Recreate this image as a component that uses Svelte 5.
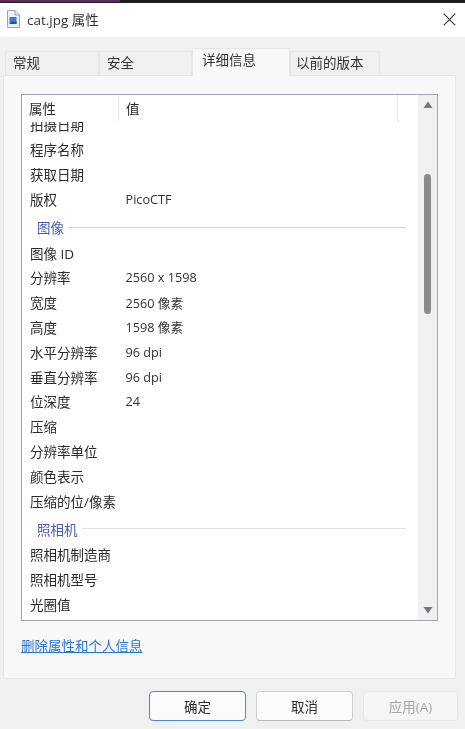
<script>
  const tabs = [
    { label: '常规', w: 94, pad: 7 },
    { label: '安全', w: 93, pad: 7 },
    { label: '详细信息', w: 98, pad: 9, active: true },
    { label: '以前的版本', w: 90, pad: 5 }
  ];
  const group1 = [
    ['程序名称', ''], ['获取日期', ''], ['版权', 'PicoCTF']
  ];
  const group2 = [
    ['图像 ID', ''], ['分辨率', '2560 x 1598'], ['宽度', '2560 像素'], ['高度', '1598 像素'],
    ['水平分辨率', '96 dpi'], ['垂直分辨率', '96 dpi'], ['位深度', '24'], ['压缩', ''],
    ['分辨率单位', ''], ['颜色表示', ''], ['压缩的位/像素', '']
  ];
  const group3 = [['照相机制造商', ''], ['照相机型号', ''], ['光圈值', '']];
</script>

<div class="screen">
  <div class="topstrip"><div class="purple"></div></div>
  <header class="titlebar">
    <svg class="fileicon" width="14" height="18" viewBox="0 0 14 18">
      <path d="M1.500 .5h7.500l4.500 4.500v12.500h-12z" fill="#eef0f5" stroke="#9aa3b2" />
      <path d="M9 .5v4.500h4.500" fill="#dfe4ec" stroke="#9aa3b2" />
      <rect x="3.500" y="7" width="7" height="7" fill="#2f7fd6" />
      <path d="M3.500 14l3-3 2 1.500 2-1.500v3z" fill="#1f4fa8" />
    </svg>
    <span class="title">cat.jpg 属性</span>
    <svg class="close" width="13" height="13" viewBox="0 0 13 13">
      <path d="M.7 .7l11.600 11.600M12.300 .7l-11.600 11.600" stroke="#333" stroke-width="1.100" fill="none" />
    </svg>
  </header>

  <main class="body">
    <nav class="tabs">
      {#each tabs as t}
        <div class="tab" class:active={t.active} style="width:{t.w}px;padding-left:{t.pad}px">{t.label}</div>
      {/each}
    </nav>

    <section class="panel">
      <div class="listbox">
        <div class="content">
          <div class="head">
            <div class="hcell first">属性</div>
            <div class="hcell second">值</div>
            <div class="hcell third"></div>
          </div>
          <div class="rows">
            <div class="row clipped"><span class="k">拍摄日期</span><span class="v"></span></div>
            {#each group1 as [k, v]}
              <div class="row"><span class="k">{k}</span><span class="v">{v}</span></div>
            {/each}
            <div class="group g1"><span>图像</span><i></i></div>
            {#each group2 as [k, v]}
              <div class="row"><span class="k">{k}</span><span class="v">{v}</span></div>
            {/each}
            <div class="group g2"><span>照相机</span><i></i></div>
            {#each group3 as [k, v]}
              <div class="row"><span class="k">{k}</span><span class="v">{v}</span></div>
            {/each}
          </div>
        </div>
        <div class="scrollbar">
          <svg width="10" height="8" viewBox="0 0 10 8"><path d="M5 .5l4.500 6.500h-9z" fill="#777" /></svg>
          <div class="track"><div class="thumb"></div></div>
          <svg width="10" height="8" viewBox="0 0 10 8"><path d="M5 7.500l4.500-6.500h-9z" fill="#777" /></svg>
        </div>
      </div>
      <div class="linkrow"><span class="link">删除属性和个人信息</span></div>
    </section>

    <footer class="buttons">
      <div class="btn primary">确定</div>
      <div class="btn">取消</div>
      <div class="btn disabled">应用(A)</div>
    </footer>
  </main>
</div>

<style>
  :global(body) {
    margin: 0;
    background: #f0f0f0;
  }
  .screen {
    width: 465px;
    height: 729px;
    overflow: hidden;
    display: flex;
    flex-direction: column;
    font-family: "Open Sans", "Noto Sans CJK SC", sans-serif;
    font-size: 13.5px;
    color: #2b2b2b;
    filter: blur(0.35px);
  }
  .topstrip {
    height: 3px;
    background: #1c1c1c;
    flex: none;
  }
  .purple {
    width: 120px;
    height: 2px;
    background: #5b2a58;
  }
  .titlebar {
    height: 34px;
    box-sizing: border-box;
    flex: none;
    background: #fff;
    display: flex;
    align-items: center;
    padding: 0 9px 2px 6px;
  }
  .fileicon {
    flex: none;
  }
  .title {
    margin-left: 7px;
    font-size: 13.5px;
    color: #333;
    flex: 1;
  }
  .body {
    flex: 1;
    display: flex;
    flex-direction: column;
    background: #f0f0f0;
    padding: 13px 9px 0 3px;
    min-height: 0;
  }
  .tabs {
    height: 25px;
    display: flex;
    align-items: flex-end;
    padding-left: 2px;
    flex: none;
    position: relative;
    z-index: 1;
  }
  .tab {
    height: 24px;
    box-sizing: border-box;
    background: #f0f0f0;
    border: 1px solid #e6e6e6;
    border-bottom: none;
    padding-top: 2px;
    line-height: 18px;
    color: #333;
  }
  .tab.active {
    height: 28px;
    margin-bottom: -1px;
    background: #f8f8f8;
    padding-top: 2px;
  }
  .panel {
    height: 604px;
    flex: none;
    box-sizing: border-box;
    background: #f8f8f8;
    border: 1px solid #e6e6e6;
    border-radius: 0 0 3px 3px;
    padding: 18px 17px 0;
  }
  .listbox {
    width: 417px;
    height: 527px;
    box-sizing: border-box;
    border: 1px solid #a3a3ad;
    background: #fff;
    display: flex;
  }
  .content {
    flex: 1;
    min-width: 0;
    overflow: hidden;
    display: flex;
    flex-direction: column;
  }
  .head {
    flex: none;
    height: 27px;
    display: flex;
    line-height: 29px;
  }
  .hcell {
    box-sizing: border-box;
    border-right: 1px solid #e8e8e8;
    padding-left: 7px;
  }
  .first { width: 97px; }
  .second { width: 279px; }
  .third { border: none; flex: 1; }
  .rows {
    flex: 1;
    overflow: hidden;
    min-height: 0;
  }
  .row {
    height: 24.8px;
    display: flex;
    align-items: center;
    padding-left: 8px;
  }
  .row.clipped {
    margin-top: -10px;
  }
  .k {
    width: 95.5px;
    flex: none;
    white-space: nowrap;
  }
  .v {
    color: #333;
    font-size: 12.7px;
  }
  .group {
    display: flex;
    align-items: center;
    box-sizing: border-box;
    padding: 3px 12px 0 15px;
    color: #4a5ab0;
    gap: 4px;
    height: 29px;
  }
  .group i {
    flex: 1;
    height: 1px;
    background: #cfd3ea;
  }
  .g2 i { background: #e2e2e2; }
  .scrollbar {
    width: 19px;
    flex: none;
    background: #f0f0f0;
    display: flex;
    flex-direction: column;
    align-items: center;
    padding: 6px 0;
    box-sizing: border-box;
  }
  .track {
    flex: 1;
    width: 100%;
    display: flex;
    justify-content: center;
    padding-top: 65px;
  }
  .thumb {
    width: 7px;
    height: 140px;
    border-radius: 4px;
    background: #8a8a8a;
  }
  .linkrow {
    margin-top: 14px;
  }
  .link {
    color: #2a76d2;
    text-decoration: underline;
    font-size: 13.5px;
  }
  .buttons {
    flex: 1;
    display: flex;
    justify-content: flex-end;
    gap: 10px;
    padding: 12px 0 0;
    margin-right: -2px;
  }
  .btn {
    width: 97px;
    height: 30px;
    box-sizing: border-box;
    background: #fbfbfb;
    border: 1px solid #d0d0d0;
    border-bottom-color: #b8b8b8;
    border-radius: 4px;
    display: flex;
    align-items: center;
    justify-content: center;
    color: #2b2b2b;
  }
  .btn.primary {
    border: 1.5px solid #4a8ad0;
  }
  .btn.disabled {
    width: 95px;
    background: #f5f5f5;
    border-color: #e8e8e8;
    color: #a6a6a6;
  }
</style>
